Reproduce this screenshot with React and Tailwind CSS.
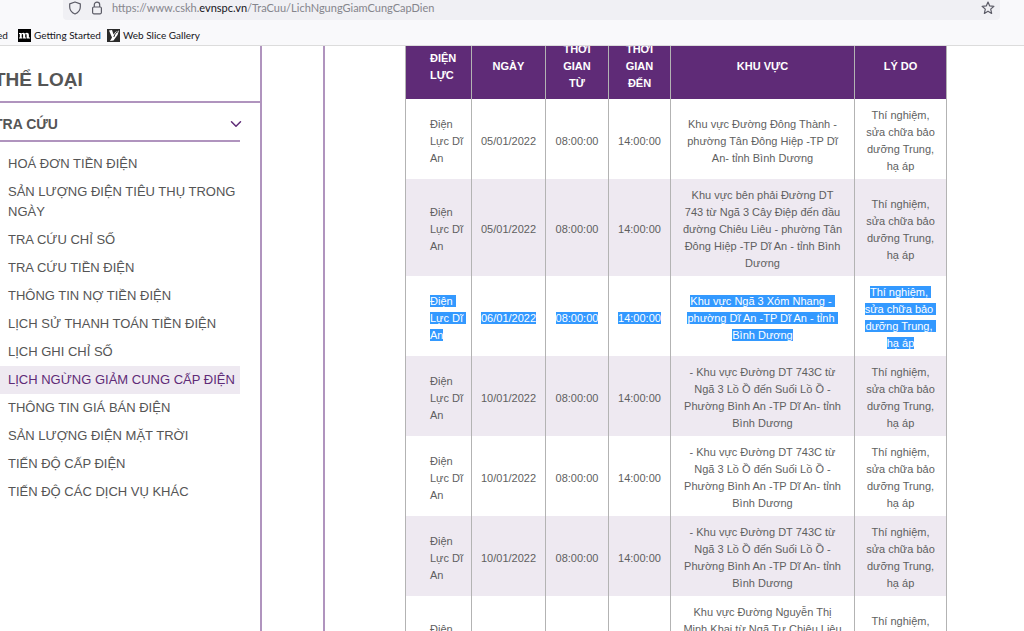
import { ChevronDown } from 'lucide-react';
import clsx from 'clsx';

const menuItems = [
  'HOÁ ĐƠN TIỀN ĐIỆN',
  'SẢN LƯỢNG ĐIỆN TIÊU THỤ TRONG NGÀY',
  'TRA CỨU CHỈ SỐ',
  'TRA CỨU TIỀN ĐIỆN',
  'THÔNG TIN NỢ TIỀN ĐIỆN',
  'LỊCH SỬ THANH TOÁN TIỀN ĐIỆN',
  'LỊCH GHI CHỈ SỐ',
  'LỊCH NGỪNG GIẢM CUNG CẤP ĐIỆN',
  'THÔNG TIN GIÁ BÁN ĐIỆN',
  'SẢN LƯỢNG ĐIỆN MẶT TRỜI',
  'TIẾN ĐỘ CẤP ĐIỆN',
  'TIẾN ĐỘ CÁC DỊCH VỤ KHÁC',
];

const activeItem = 'LỊCH NGỪNG GIẢM CUNG CẤP ĐIỆN';

const unit = ['Điện', 'Lực Dĩ', 'An'];
const reason = ['Thí nghiệm,', 'sửa chữa bảo', 'dưỡng Trung,', 'hạ áp'];
const loO = [
  '- Khu vực Đường DT 743C từ',
  'Ngã 3 Lồ Ồ đến Suối Lồ Ồ -',
  'Phường Bình An -TP Dĩ An- tỉnh',
  'Bình Dương',
];

const outages = [
  {
    date: '05/01/2022',
    area: ['Khu vực Đường Đông Thành -', 'phường Tân Đông Hiệp -TP Dĩ', 'An- tỉnh Bình Dương'],
  },
  {
    date: '05/01/2022',
    area: [
      'Khu vực bên phải Đường DT',
      '743 từ Ngã 3 Cây Điệp đến đầu',
      'đường Chiêu Liêu - phường Tân',
      'Đông Hiệp -TP Dĩ An - tỉnh Bình',
      'Dương',
    ],
  },
  {
    date: '06/01/2022',
    area: ['Khu vực Ngã 3 Xóm Nhang -', 'phường Dĩ An -TP Dĩ An - tỉnh', 'Bình Dương'],
    selected: true,
  },
  { date: '10/01/2022', area: loO },
  { date: '10/01/2022', area: loO },
  { date: '10/01/2022', area: loO },
  {
    date: '11/01/2022',
    area: [
      'Khu vực Đường Nguyễn Thị',
      'Minh Khai từ Ngã Tư Chiêu Liêu',
      '- phường Tân Đông Hiệp',
      '-TP Dĩ An - tỉnh Bình',
      'Dương',
    ],
  },
];

function Lines({ lines, selected }) {
  return lines.map((line, i) => (
    <span key={i} className="block whitespace-pre">
      <span className={clsx(selected && 'bg-[#3399ff] text-white')}>
        {line}
        {selected && i < lines.length - 1 ? ' ' : ''}
      </span>
    </span>
  ));
}

function BrowserBar() {
  return (
    <header className="h-[46px] shrink-0 overflow-hidden border-b border-[#dcdcdc] bg-[#f9f9fb] font-[Lato,sans-serif]">
      <div className="-mt-1 mr-6 ml-[63px] flex h-6 items-center rounded bg-[#f0f0f4] pr-[5px] pl-[5px]">
        <button type="button" aria-label="Tracking protection">
          <svg viewBox="0 0 14 14" className="size-[14px]" fill="none" stroke="#5b5b66" strokeWidth="1.2">
            <path d="M7 1 12.3 2.9V6c0 3.2-2 5.600-5.300 7C3.700 11.600 1.700 9.200 1.700 6V2.900Z" strokeLinejoin="round" />
          </svg>
        </button>
        <button type="button" aria-label="Site information" className="ml-2">
          <svg viewBox="0 0 14 14" className="size-[14px]" fill="none" stroke="#5b5b66" strokeWidth="1.2">
            <rect x="2.600" y="6" width="8.800" height="6.800" rx="1.200" />
            <path d="M4.300 6V3.800a2.700 2.700 0 0 1 5.400 0V6" />
          </svg>
        </button>
        <div role="textbox" aria-label="Address" className="ml-2 flex-1 text-[11px] leading-5 text-[#85858c]">
          https://www.cskh.<span className="text-[#15141a]">evnspc.vn</span>/TraCuu/LichNgungGiamCungCapDien
        </div>
        <button type="button" aria-label="Bookmark this page">
          <svg viewBox="0 0 14 14" className="size-[14px]" fill="none" stroke="#5b5b66" strokeWidth="1.2" strokeLinejoin="round">
            <path d="m7 1 1.700 3.900 4.200.4-3.200 2.800.95 4.300L7 10.200l-3.650 2.200.95-4.300-3.200-2.800 4.200-.4Z" />
          </svg>
        </button>
      </div>
      <nav className="mt-1 flex h-[22px] items-center text-[10px] leading-5 text-[#15141a]">
        <a href="#started" className="-ml-[3px] w-[21px]">ed</a>
        <a href="#getting-started" className="flex items-center gap-[3px]">
          <svg viewBox="0 0 13 13" className="size-[13px]">
            <rect width="13" height="13" fill="#000" />
            <path d="M1 4h2.500v.7Q4.300 3.800 5.400 3.800T7 4.700Q7.700 3.800 9 3.800q1.900 0 1.900 2V8.500H12V9.500H8.600V6q0-.9-.7-.9T7.200 6v2.500H8v1H5.100V6q0-.9-.7-.9T3.700 6v2.500h.7v1H1v-1h.8V5H1Z" fill="#fff" />
          </svg>
          Getting Started
        </a>
        <a href="#web-slice" className="ml-[6px] flex items-center gap-[3px]">
          <svg viewBox="0 0 13 13" className="size-[13px]">
            <rect width="13" height="13" fill="#2b2b2b" />
            <path d="M2 1.500 5 1l1.500 4.500L8.500 3 12 1.500 10.500 6l-4 5.500L3 12l2-3.500Z" fill="#fff" />
            <path d="m6.800 8 1.500-3.500L11 2.500" stroke="#2b2b2b" fill="none" />
          </svg>
          Web Slice Gallery
        </a>
      </nav>
    </header>
  );
}

function Sidebar() {
  return (
    <aside className="w-[262px] shrink-0 border-r-2 border-[#b094be] text-[#555]">
      <h2 className="-ml-[6px] border-b-2 border-[#b094be] pt-5 pb-[7px] text-[19px] leading-7 font-bold">
        THỂ LOẠI
      </h2>
      <div className="mr-5">
        <button
          type="button"
          className="flex h-[39px] w-full items-center justify-between border-b-2 border-[#b094be] pt-1"
        >
          <span className="-ml-[6px] text-[14px] leading-5 font-bold">TRA CỨU</span>
          <ChevronDown className="-mr-[5px] size-[18px] text-[#5f2b77]" strokeWidth={2} />
        </button>
        <ul className="pt-2">
          {menuItems.map((item) => (
            <li key={item}>
              <a
                href="#tra-cuu"
                className={clsx(
                  'block py-1 pl-2 text-[13px] leading-5',
                  item === activeItem && 'bg-[#eee9f1] text-[#5f2b77]'
                )}
              >
                {item}
              </a>
            </li>
          ))}
        </ul>
      </div>
    </aside>
  );
}

function OutageTable() {
  const th = 'border-x border-[#b3b3b3] py-[7px] align-middle';
  const td = 'border-x border-[#b3b3b3] pt-2 pb-1 align-middle';

  return (
    <table className="-mt-3 w-full table-fixed border-collapse text-center text-[11px] leading-[17px] text-[#5f5f5f]">
      <colgroup>
        <col className="w-[66px]" />
        <col className="w-[74px]" />
        <col className="w-[63px]" />
        <col className="w-[62px]" />
        <col />
        <col className="w-[92px]" />
      </colgroup>
      <thead className="bg-[#5f2b77] text-white">
        <tr>
          <th className={clsx(th, 'pl-6 text-left')}><Lines lines={['ĐIỆN', 'LỰC']} /></th>
          <th className={th}>NGÀY</th>
          <th className={th}><Lines lines={['THỜI', 'GIAN', 'TỪ']} /></th>
          <th className={th}><Lines lines={['THỜI', 'GIAN', 'ĐẾN']} /></th>
          <th className={th}>KHU VỰC</th>
          <th className={th}>LÝ DO</th>
        </tr>
      </thead>
      <tbody>
        {outages.map(({ date, area, selected }, i) => (
          <tr key={i} className="even:bg-[#eee9f1]">
            <td className={clsx(td, 'pl-6 text-left')}><Lines lines={unit} selected={selected} /></td>
            <td className={td}><Lines lines={[date]} selected={selected} /></td>
            <td className={td}><Lines lines={['08:00:00']} selected={selected} /></td>
            <td className={td}><Lines lines={['14:00:00']} selected={selected} /></td>
            <td className={td}><Lines lines={area} selected={selected} /></td>
            <td className={td}><Lines lines={reason} selected={selected} /></td>
          </tr>
        ))}
      </tbody>
    </table>
  );
}

export default function App() {
  return (
    <div className="flex h-screen flex-col overflow-hidden bg-white font-['Liberation_Sans',sans-serif]">
      <BrowserBar />
      <div className="flex min-h-0 flex-1 overflow-hidden">
        <Sidebar />
        <main className="ml-[61px] flex-1 border-l-2 border-[#b094be] pr-[77px] pl-20">
          <OutageTable />
        </main>
      </div>
    </div>
  );
}
